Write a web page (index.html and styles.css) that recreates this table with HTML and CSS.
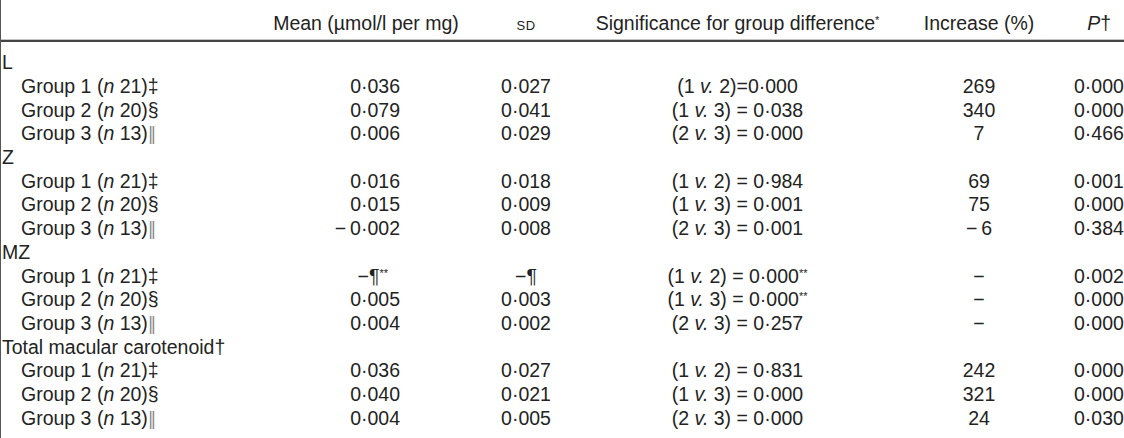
FILE: index.html
```html
<!DOCTYPE html>
<html lang="en">
<head>
<meta charset="utf-8">
<title>Macular pigment table</title>
<link rel="stylesheet" href="styles.css">
</head>
<body>
<div class="table">
  <div class="row head">
    <div></div>
    <div class="c">Mean (µmol/l per mg)</div>
    <div class="c"><span class="sc">SD</span></div>
    <div class="c">Significance for group difference<sup>*</sup></div>
    <div class="c">Increase (%)</div>
    <div class="p ph"><i>P</i>†</div>
  </div>
  <div class="rule"></div>
  <div class="body">
    <div class="row"><div class="cat">L</div></div>
    <div class="row"><div class="grp">Group 1 (<i>n</i> 21)‡</div><div class="mean">0·036</div><div class="c">0·027</div><div class="c">(1 <i>v.</i> 2)=0·000</div><div class="c">269</div><div class="p">0·000</div></div>
    <div class="row"><div class="grp">Group 2 (<i>n</i> 20)§</div><div class="mean">0·079</div><div class="c">0·041</div><div class="c">(1 <i>v.</i> 3) = 0·038</div><div class="c">340</div><div class="p">0·000</div></div>
    <div class="row"><div class="grp">Group 3 (<i>n</i> 13)<span class="dbar">‖</span></div><div class="mean">0·006</div><div class="c">0·029</div><div class="c">(2 <i>v.</i> 3) = 0·000</div><div class="c">7</div><div class="p">0·466</div></div>
    <div class="row"><div class="cat">Z</div></div>
    <div class="row"><div class="grp">Group 1 (<i>n</i> 21)‡</div><div class="mean">0·016</div><div class="c">0·018</div><div class="c">(1 <i>v.</i> 2) = 0·984</div><div class="c">69</div><div class="p">0·001</div></div>
    <div class="row"><div class="grp">Group 2 (<i>n</i> 20)§</div><div class="mean">0·015</div><div class="c">0·009</div><div class="c">(1 <i>v.</i> 3) = 0·001</div><div class="c">75</div><div class="p">0·000</div></div>
    <div class="row"><div class="grp">Group 3 (<i>n</i> 13)<span class="dbar">‖</span></div><div class="mean">−&thinsp;0·002</div><div class="c">0·008</div><div class="c">(2 <i>v.</i> 3) = 0·001</div><div class="c">−&thinsp;6</div><div class="p">0·384</div></div>
    <div class="row"><div class="cat">MZ</div></div>
    <div class="row"><div class="grp">Group 1 (<i>n</i> 21)‡</div><div class="mean note">−¶<sup>**</sup></div><div class="c">−¶</div><div class="c">(1 <i>v.</i> 2) = 0·000<sup>**</sup></div><div class="c">−</div><div class="p">0·002</div></div>
    <div class="row"><div class="grp">Group 2 (<i>n</i> 20)§</div><div class="mean">0·005</div><div class="c">0·003</div><div class="c">(1 <i>v.</i> 3) = 0·000<sup>**</sup></div><div class="c">−</div><div class="p">0·000</div></div>
    <div class="row"><div class="grp">Group 3 (<i>n</i> 13)<span class="dbar">‖</span></div><div class="mean">0·004</div><div class="c">0·002</div><div class="c">(2 <i>v.</i> 3) = 0·257</div><div class="c">−</div><div class="p">0·000</div></div>
    <div class="row"><div class="cat">Total macular carotenoid†</div></div>
    <div class="row"><div class="grp">Group 1 (<i>n</i> 21)‡</div><div class="mean">0·036</div><div class="c">0·027</div><div class="c">(1 <i>v.</i> 2) = 0·831</div><div class="c">242</div><div class="p">0·000</div></div>
    <div class="row"><div class="grp">Group 2 (<i>n</i> 20)§</div><div class="mean">0·040</div><div class="c">0·021</div><div class="c">(1 <i>v.</i> 3) = 0·000</div><div class="c">321</div><div class="p">0·000</div></div>
    <div class="row"><div class="grp">Group 3 (<i>n</i> 13)<span class="dbar">‖</span></div><div class="mean">0·004</div><div class="c">0·005</div><div class="c">(2 <i>v.</i> 3) = 0·000</div><div class="c">24</div><div class="p">0·030</div></div>
  </div>
</div>
</body>
</html>
```

FILE: styles.css
```css
html, body {
  margin: 0;
  padding: 0;
  background: #ffffff;
}

body {
  font-family: "Liberation Sans", Arial, sans-serif;
  font-size: 19.5px;
  color: #232323;
  overflow: hidden;
  width: 1124px;
  height: 438px;
}

.table {
  width: 1124px;
  height: 438px;
  box-sizing: border-box;
  border-left: 1px solid #555555;
}

.row {
  display: grid;
  grid-template-columns: 270px 190px 130px 293px 190px 50px;
  height: 23.73px;
  line-height: 23.73px;
  white-space: nowrap;
}

.head {
  height: 39px;
  padding-top: 12px;
  box-sizing: border-box;
}

.rule {
  height: 1px;
  background: #c4c4c4;
  border-bottom: 2px solid #444444;
}

.body {
  padding-top: 9.15px;
}

.c {
  text-align: center;
}

.p {
  text-align: right;
  padding-right: 2px;
}

.p.ph {
  padding-right: 13px;
}

.mean {
  text-align: right;
  padding-right: 61px;
}

.mean.note {
  padding-right: 73px;
}

.cat {
  grid-column: 1 / -1;
  padding-left: 1px;
}

.grp {
  padding-left: 20px;
}

.sc {
  font-size: 13px;
  letter-spacing: 0.5px;
}

sup {
  font-size: 11px;
  line-height: 0;
  vertical-align: 0.55em;
}

.dbar {
  color: #8a8a8a;
  font-family: "DejaVu Sans", sans-serif;
  font-size: 17px;
}
```
